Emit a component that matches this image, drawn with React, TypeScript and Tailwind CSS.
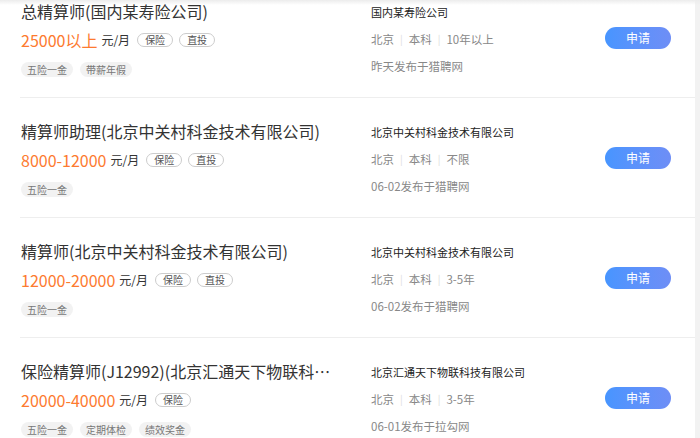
const jobs = [
  {
    title: '总精算师(国内某寿险公司)',
    salary: '25000以上',
    badges: ['保险', '直投'],
    tags: ['五险一金', '带薪年假'],
    company: '国内某寿险公司',
    meta: ['北京', '本科', '10年以上'],
    posted: '昨天发布于猎聘网',
  },
  {
    title: '精算师助理(北京中关村科金技术有限公司)',
    salary: '8000-12000',
    badges: ['保险', '直投'],
    tags: ['五险一金'],
    company: '北京中关村科金技术有限公司',
    meta: ['北京', '本科', '不限'],
    posted: '06-02发布于猎聘网',
  },
  {
    title: '精算师(北京中关村科金技术有限公司)',
    salary: '12000-20000',
    badges: ['保险', '直投'],
    tags: ['五险一金'],
    company: '北京中关村科金技术有限公司',
    meta: ['北京', '本科', '3-5年'],
    posted: '06-02发布于猎聘网',
  },
  {
    title: '保险精算师(J12992)(北京汇通天下物联科技有限公司)',
    salary: '20000-40000',
    badges: ['保险'],
    tags: ['五险一金', '定期体检', '绩效奖金'],
    company: '北京汇通天下物联科技有限公司',
    meta: ['北京', '本科', '3-5年'],
    posted: '06-01发布于拉勾网',
  },
]

function JobRow({ job }: { job: (typeof jobs)[number] }) {
  return (
    <div className="ml-[20px] h-[120px] flex border-b border-[#eeeeee]">
      <div className="w-[311px] pl-[1px] shrink-0">
        <div className="mt-[22px] text-[16px] leading-[22px] text-[#333] truncate">{job.title}</div>
        <div className="mt-[7px] h-[22px] flex items-center">
          <span className="text-[16px] leading-[22px] text-[#fd7a2f]">{job.salary}</span>
          <span className="ml-[4px] text-[12px] text-[#333]">元/月</span>
          <div className="ml-[7px] flex gap-[6px]">
            {job.badges.map((b) => (
              <span key={b} className="h-[14px] px-[7px] flex items-center text-[10px] leading-none text-[#555] border border-[#cccccc] rounded-full">
                {b}
              </span>
            ))}
          </div>
        </div>
        <div className="mt-[11px] flex gap-[7px]">
          {job.tags.map((t) => (
            <span key={t} className="h-[15px] px-[6px] flex items-center text-[10px] leading-none text-[#777] bg-[#f2f2f2] rounded-full">
              {t}
            </span>
          ))}
        </div>
      </div>
      <div className="ml-[40px] w-[234px] shrink-0">
        <div className="mt-[26px] text-[11px] leading-[16px] text-[#222]">{job.company}</div>
        <div className="mt-[11px] text-[11.5px] leading-[16px] text-[#888] flex items-center">
          {job.meta.map((m, i) => (
            <span key={i} className="flex items-center">
              {i > 0 && <span className="mx-[6px] text-[#dddddd] text-[10px]">|</span>}
              {m}
            </span>
          ))}
        </div>
        <div className="mt-[11px] text-[11.5px] leading-[16px] text-[#888]">{job.posted}</div>
      </div>
      <div className="flex items-center">
        <button className="w-[66px] h-[22px] rounded-full bg-gradient-to-r from-[#4795ff] to-[#6e8ef6] text-white text-[12px] leading-none">
          申请
        </button>
      </div>
    </div>
  )
}

export default function App() {
  return (
    <div
      className="relative w-[700px] h-[438px] overflow-hidden bg-[#f2f2f2] flex"
      style={{ fontFamily: '"Noto Sans CJK SC", "Noto Sans", sans-serif' }}
    >
      <div className="w-[695px] bg-white">
        <div className="-mt-[22px]">
          {jobs.map((job) => (
            <JobRow key={job.title} job={job} />
          ))}
        </div>
      </div>
      <div className="absolute top-0 left-0 right-0 h-[5px] bg-gradient-to-b from-[#ececec] to-transparent" />
    </div>
  )
}
